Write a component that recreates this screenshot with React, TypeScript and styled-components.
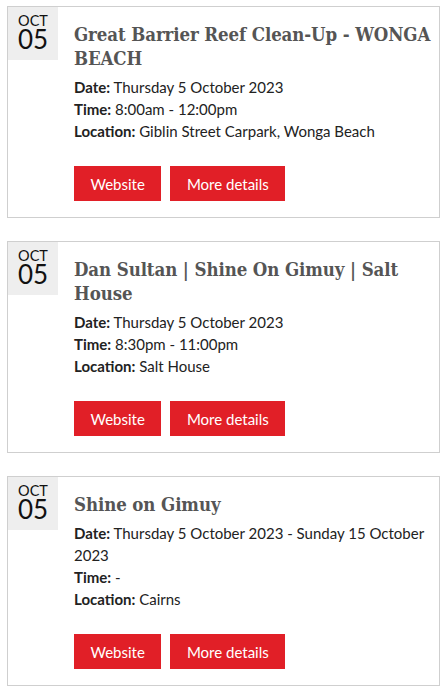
import React from "react";
import styled, { createGlobalStyle } from "styled-components";

const Global = createGlobalStyle`
  html, body { margin: 0; padding: 0; background: #fff; }
  body { font-family: Lato, "Open Sans", sans-serif; color: #222; }
`;

const List = styled.div`
  display: flex;
  flex-direction: column;
  gap: 23px;
  padding: 6px 5px 0 7px;
`;

const Card = styled.article`
  display: flex;
  align-items: flex-start;
  border: 1px solid #cfcfcf;
  padding-bottom: 16px;
`;

const DateBox = styled.div`
  width: 50px;
  height: 53px;
  flex: none;
  background: #eeeeee;
  display: flex;
  flex-direction: column;
  align-items: center;
  padding-top: 7px;
  box-sizing: border-box;
  color: #111;
`;

const Month = styled.span`
  font-size: 14.5px;
  line-height: 14px;
`;

const Day = styled.span`
  font-size: 26px;
  line-height: 23px;
`;

const Body = styled.div`
  flex: 1;
  padding: 16px 4px 0 16px;
  display: flex;
  flex-direction: column;
`;

const Title = styled.h2`
  margin: 0 0 5px;
  font-family: "DejaVu Serif Condensed", "DejaVu Serif", serif;
  font-stretch: condensed;
  font-weight: bold;
  font-size: 18.5px;
  letter-spacing: -0.1px;
  line-height: 24px;
  color: #555;
`;

const Info = styled.p`
  margin: 0;
  font-size: 15px;
  line-height: 22px;
`;

const Label = styled.strong`
  font-weight: bold;
`;

const Buttons = styled.div`
  display: flex;
  gap: 9px;
  margin-top: 24px;
`;

const Button = styled.a`
  display: inline-flex;
  align-items: center;
  justify-content: center;
  height: 35px;
  padding: 0 16.5px;
  background: #e11f27;
  color: #fff;
  font-size: 15px;
  text-decoration: none;
`;

type Ev = { title: string; date: string; time: string; location: string };

const events: Ev[] = [
  {
    title: "Great Barrier Reef Clean-Up - WONGA BEACH",
    date: "Thursday 5 October 2023",
    time: "8:00am - 12:00pm",
    location: "Giblin Street Carpark, Wonga Beach",
  },
  {
    title: "Dan Sultan | Shine On Gimuy | Salt House",
    date: "Thursday 5 October 2023",
    time: "8:30pm - 11:00pm",
    location: "Salt House",
  },
  {
    title: "Shine on Gimuy",
    date: "Thursday 5 October 2023 - Sunday 15 October 2023",
    time: "-",
    location: "Cairns",
  },
];

export default function App() {
  return (
    <>
      <Global />
      <List>
        {events.map((e, i) => (
          <Card key={i}>
            <DateBox>
              <Month>OCT</Month>
              <Day>05</Day>
            </DateBox>
            <Body>
              <Title>{e.title}</Title>
              <Info><Label>Date:</Label> {e.date}</Info>
              <Info><Label>Time:</Label> {e.time}</Info>
              <Info><Label>Location:</Label> {e.location}</Info>
              <Buttons>
                <Button href="#">Website</Button>
                <Button href="#">More details</Button>
              </Buttons>
            </Body>
          </Card>
        ))}
      </List>
    </>
  );
}
